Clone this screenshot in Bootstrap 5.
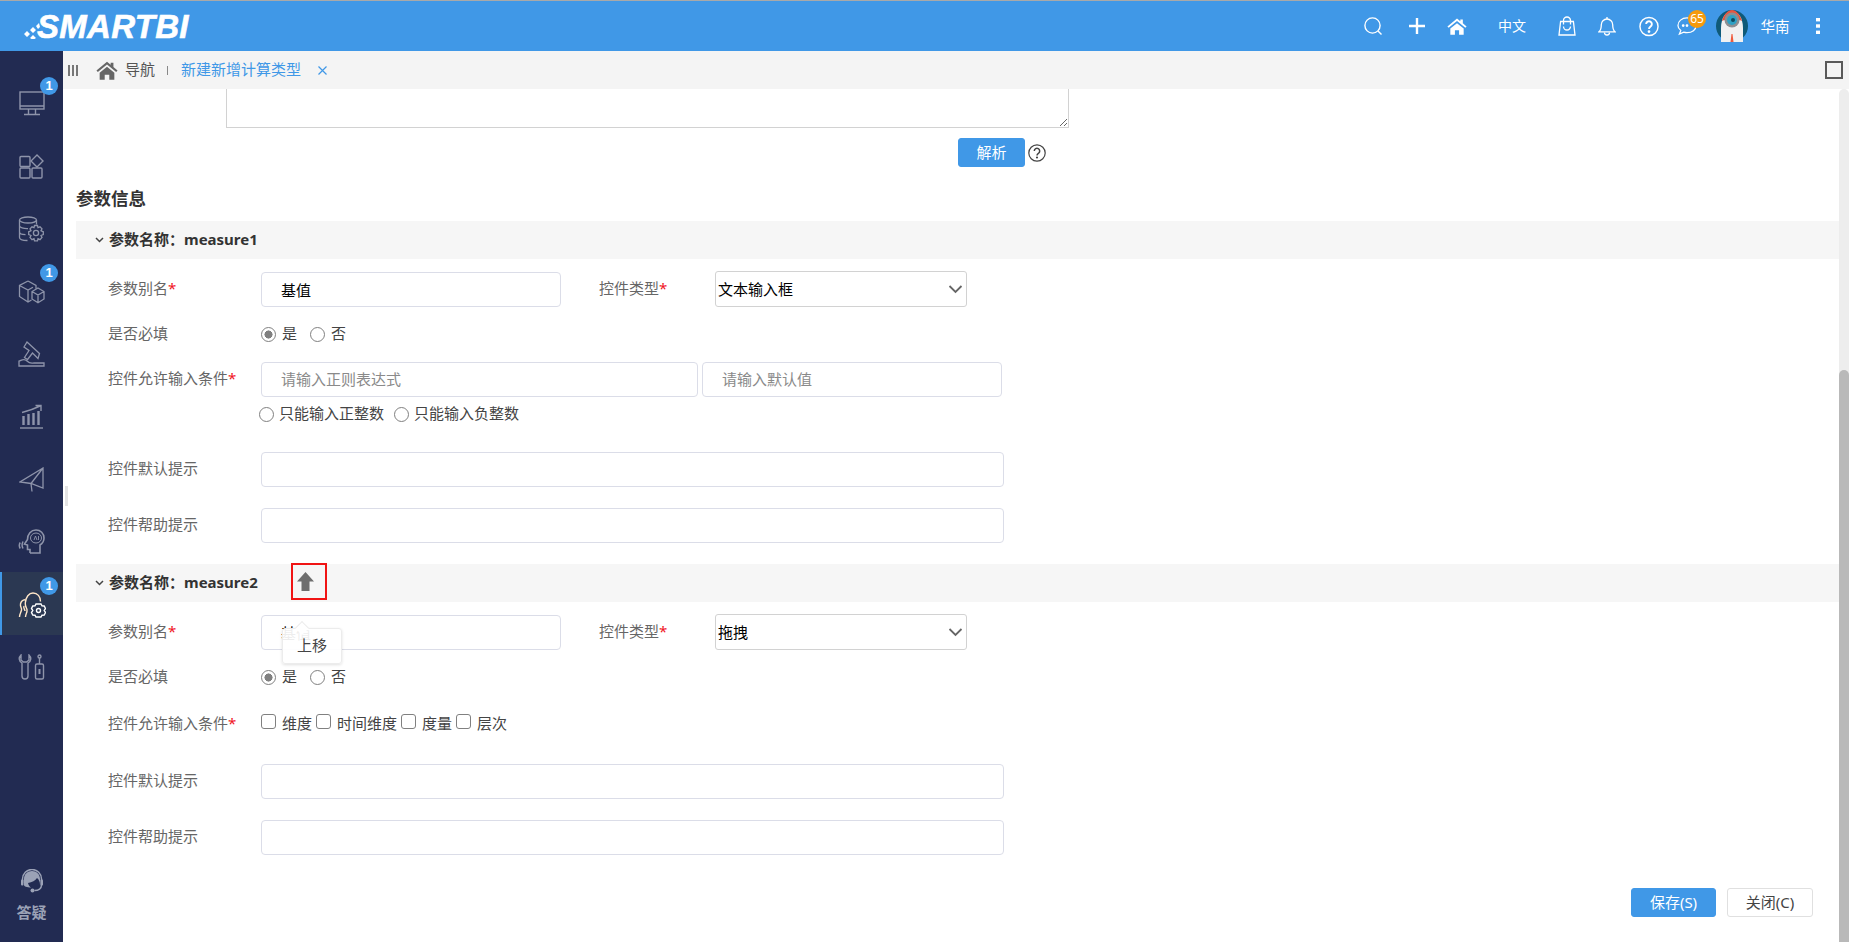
<!DOCTYPE html>
<html lang="zh">
<head>
<meta charset="utf-8">
<title>新建新增计算类型</title>
<link href="https://cdn.jsdelivr.net/npm/bootstrap@5.3.0/dist/css/bootstrap.min.css" rel="stylesheet">
<style>
html,body{height:942px;overflow:hidden;background:#fff}
body{font-family:"Noto Sans","Noto Sans CJK SC",sans-serif;font-size:15px;color:#555;line-height:1.3}
.app-top{height:51px;background:#4098e7;border-top:1px solid #a9a9a9;color:#fff;position:relative}
.logo-text{font-family:"Liberation Sans",sans-serif;font-weight:700;font-style:italic;font-size:33px;line-height:1;color:#fff;margin-left:-3px;letter-spacing:.3px;-webkit-text-stroke:.6px #fff}
.logo-wrap{margin-left:24px;padding-top:1px}
.top-tools{margin-left:auto}
.tool{display:flex;align-items:center;justify-content:center}
.tool-s{width:20px}
.tool-lang{font-size:14px;width:30px;white-space:nowrap}
.msg-count{position:absolute;top:9px;left:1688px;width:18px;height:18px;background:#f59a0c;color:#fff;font-size:12px;font-weight:400;padding:0;line-height:18px;border-radius:50%;text-align:center}
.app-body{height:891px}
.side{width:63px;background:#222b52;padding-top:20.5px;position:relative;flex:none}
.side-item{height:62.6px;position:relative;display:flex;align-items:center;justify-content:center;padding-top:2px}
.side-item.on{background:#2b3852;border-left:2px solid #4098e7;padding-right:2px}
.side-num{position:absolute;top:5px;left:40px;width:18px;height:18px;border-radius:50%;background:#4098e7;color:#fff;font-family:"Liberation Sans",sans-serif;font-size:13px;line-height:18px;padding:0;font-weight:700}
.side-help{position:absolute;left:0;right:0;top:818px;text-align:center;color:#9ba2b6;font-weight:700;font-size:15px;line-height:1.2}
.side-help svg{display:block;margin:0 auto 10px}
.split-mark{position:absolute;left:65px;top:486px;width:3px;height:20px;background:#e4e4e4}
.tabbar{height:38px;background:#f4f4f4;padding-left:5px;padding-right:6px;flex:none}
.bars3{width:10px;margin-right:18px}
.tab-home{font-size:15px;color:#555;margin-left:7px}
.tab-sep{width:1px;height:9px;background:#888;margin:0 13px 0 12px}
.tab-cur{color:#4098e7}
.tab-x{margin-left:17px}
.max-box{margin-left:auto;width:18px;height:18px;border:2px solid #5a5a5a;background:#f4f4f4}
.work{flex:1;min-height:0}
.pane{flex:1;min-width:0;position:relative}
.track{width:10px;background:#ededed;border-radius:5px 5px 0 0;flex:none}
.thumb{height:572px;margin-top:281px;background:#b9b9b9;border-radius:5px 5px 0 0}
.old-area{display:block;margin-left:163px;width:843px;height:39px;border:1px solid #d2d2d2;border-top:0;border-radius:0;padding:0}
.parse-row{margin-top:10px;margin-left:895px;height:29px}
.btn-main{background:#4098e7;border:1px solid #4098e7;color:#fff;font-size:15px;padding:0;height:29px;border-radius:3px}
.btn-main:hover{background:#4098e7;color:#fff}
.btn-parse{width:67px}
.help-dot{margin-left:3px}
.sec-title{font-size:17.5px;font-weight:700;color:#333;margin:19px 0 0 13px;height:24px;line-height:24px}
.para-head{margin-left:13px;height:38px;background:#f6f6f6;font-weight:700;font-size:15px;color:#333;padding-left:19px;position:relative}
.para-head svg.chev{margin-right:5px}
.f-row{margin-left:45px;display:flex;align-items:center;height:36px}
.f-lab{width:153px;flex:none;color:#666;font-size:15px;white-space:nowrap}
.req{color:#f0141e}
.f-in{border:1px solid #dbdde8;border-radius:4px;height:35px;padding:0 19px;font-size:15px;color:#000;box-shadow:none}
.f-in::placeholder{color:#8a8a8a}
.w-alias{width:300px}
.f-lab2{width:116px;flex:none;margin-left:38px;color:#666;font-size:15px}
.f-sel{width:252px;height:36px;border:1px solid #d2d2d2;border-radius:3px;padding:0 0 0 2px;color:#000;font-size:15px;background-position:right 3px center;background-size:15px 12px;
background-image:url("data:image/svg+xml,%3csvg xmlns='http://www.w3.org/2000/svg' viewBox='0 0 15 12'%3e%3cpath fill='none' stroke='%23666' stroke-width='1.8' d='M1.5 3l6 6 6-6'/%3e%3c/svg%3e")}
.w-reg{width:437px}
.w-def{width:300px;margin-left:4px}
.w-long{width:743px}
.pick{display:inline-flex;align-items:center;color:#444;font-size:15px;white-space:nowrap}
.pick .form-check-input{margin:0;width:15px;height:15px;border:1px solid #808080;flex:none;box-shadow:none}
.pick .form-check-input:checked{background-color:#fff;border-color:#808080;background-image:radial-gradient(circle,#808080 0 42%,transparent 46%)}
.pick .form-check-input[type=checkbox]{border-radius:3px;margin-top:-6px}
.pick span{margin-left:6px}
.pick-gap{margin-left:13px}
.pick-gap2{margin-left:10px}
.pick-gap3{margin-left:4px}
.sub-row{margin-left:196px;height:34px;display:flex;align-items:center;margin-top:-1px;padding-top:2px}
.sub-row .pick span{margin-left:5px}
.red-box{position:absolute;left:215px;top:-1px;width:36px;height:37px;border:2px solid #f01414;display:flex;align-items:center;justify-content:flex-start;padding-left:4px}
.tip-box{position:absolute;left:206px;top:64px;width:60px;height:36px;background:rgba(255,255,255,.93);border:1px solid #ececec;border-radius:3px;box-shadow:0 1px 3px rgba(0,0,0,.12);font-size:15px;font-weight:400;color:#444;display:flex;align-items:center;justify-content:center}
.tip-box::before{content:"";position:absolute;left:14px;top:-6px;width:10px;height:10px;background:#fff;transform:rotate(45deg);border-left:1px solid #ececec;border-top:1px solid #ececec}
.foot-row{margin-top:33px;padding-right:26px;justify-content:flex-end;gap:11px;display:flex}
.btn-save{width:85px}
.btn-close-x{width:86px;height:29px;background:#fff;border:1px solid #e0e0e0;color:#444;font-size:15px;padding:0;border-radius:3px}
.mt-r9{margin-top:9px}.mt-r12{margin-top:12px}
</style>
</head>
<body>
<div class="app-top d-flex align-items-center">
  <div class="logo-wrap d-flex align-items-center">
    <svg width="16" height="24" viewBox="0 0 16 24" fill="#fff"><path d="M0 19l3-3 3 3-3 3zM6 23l3-3 3 3-3 2zM6 15l3-3 3 3-3 3zM12 11l3-3 1 4-2 2z"/></svg>
    <span class="logo-text">SMARTBI</span>
  </div>
  <div class="top-tools d-flex align-items-center" style="margin-right:29px">
    <div class="tool tool-s"><svg width="20" height="20" viewBox="0 0 20 20" fill="none" stroke="#fff" stroke-width="1.4"><circle cx="9.5" cy="9.5" r="7.6"/><path d="M15 15l3.5 3.5"/></svg></div>
    <div class="tool tool-s" style="margin-left:24px"><svg width="16" height="16" viewBox="0 0 16 16" stroke="#fff" stroke-width="2.4"><path d="M8 0v16M0 8h16"/></svg></div>
    <div class="tool tool-s" style="margin-left:20px"><svg width="25" height="21" viewBox="0 0 24 20" fill="#fff"><path d="M12 0.5L0.5 10l1.500 1.500L12 3.500l10 8 1.500-1.500L19 6.200V1.500h-3v2.200z"/><path d="M4 12.500L12 6l8 6.500V20h-5.500v-5.500h-5V20H4z"/></svg></div>
    <div class="tool tool-lang" style="margin-left:30px">中文</div>
    <div class="tool tool-s" style="margin-left:30px"><svg width="18" height="20" viewBox="0 0 18 20" fill="none" stroke="#fff" stroke-width="1.3"><path d="M2.6 5.500h12.800L17 19H1zM5.500 8.500V4.500a3.500 3.500 0 0 1 7 0v4"/><path d="M5.500 10.500a3.500 3.500 0 0 0 7 0"/></svg></div>
    <div class="tool tool-s" style="margin-left:20px"><svg width="18" height="20" viewBox="0 0 18 20" fill="none" stroke="#fff" stroke-width="1.3"><path d="M1 15.800c2-1.500 2.300-3.500 2.300-7A5.700 5.700 0 0 1 9 3a5.700 5.700 0 0 1 5.700 5.800c0 3.500.3 5.500 2.300 7z"/><path d="M9 1v2M6.500 16.500a2.500 2.500 0 0 0 5 0"/></svg></div>
    <div class="tool tool-s" style="margin-left:22px"><svg width="21" height="21" viewBox="0 0 21 21" fill="none" stroke="#fff" stroke-width="1.5"><circle cx="10.500" cy="10.500" r="9.500"/><path stroke-width="2" d="M7.500 8a3 3 0 1 1 4.500 2.600c-1 .6-1.500 1.200-1.500 2.600"/><circle cx="10.500" cy="15.800" r=".7" fill="#fff"/></svg></div>
    <div class="tool tool-s" style="margin-left:18px"><svg width="21" height="20" viewBox="0 0 21 20" fill="none" stroke="#fff" stroke-width="1.3"><path d="M2.500 18.500l1.500-3.700C2 13.300 1 11.500 1 9.500 1 5 5 1.500 10.500 1.500S20 5 20 9.500 16 17 10.500 17c-1 0-2.500-.2-3.500-.5z"/><circle cx="6.500" cy="9.500" r=".8" fill="#fff"/><circle cx="10.500" cy="9.500" r=".8" fill="#fff"/></svg></div>
    <div class="tool" style="margin-left:19px;width:32px"><svg width="32" height="32" viewBox="0 0 32 32"><circle cx="16" cy="16" r="16" fill="#0f5a78"/><path d="M5 32V18C5 8 10 1 16 1s11 7 11 17v14z" fill="#f1f1f1"/><path d="M6 11C8 4 12 0 16 0s8 4 10 11c-3-2-17-2-20 0z" fill="#e8553f"/><circle cx="16" cy="10" r="7.500" fill="#8d8f92"/><circle cx="16" cy="10" r="5" fill="#2ea1c4"/><circle cx="17" cy="10" r="2" fill="#0f4a60"/><path d="M14.500 32l1-8h1l1 8z" fill="#f05a3c"/></svg></div>
    <div class="tool" style="margin-left:12px;width:30px;font-size:14.500px;white-space:nowrap">华南</div>
    <div class="tool" style="margin-left:26px;width:4px"><svg width="4" height="16" viewBox="0 0 4 16" fill="#fff"><rect y="0" width="4" height="3.400"/><rect y="6.300" width="4" height="3.400"/><rect y="12.600" width="4" height="3.400"/></svg></div>
  </div>
  <span class="badge msg-count">65</span>
</div>

<div class="app-body d-flex">
  <nav class="side">
    <div class="side-item"><span class="badge side-num">1</span>
      <svg width="26" height="25" viewBox="0 0 26 25" fill="none" stroke="#8e94aa" stroke-width="1.400"><rect x="1" y="1" width="24" height="17"/><path d="M1 15h24M9.500 18v5M16.500 18v5M5 23.500h16"/></svg></div>
    <div class="side-item">
      <svg width="25" height="25" viewBox="0 0 25 25" fill="none" stroke="#8e94aa" stroke-width="1.400"><rect x="1" y="2.500" width="10" height="10" rx="1"/><rect x="1" y="14" width="10" height="10" rx="1"/><rect x="13" y="14" width="10" height="10" rx="1"/><path d="M18 1l6 6-6 6-6-6z"/></svg></div>
    <div class="side-item">
      <svg width="27" height="26" viewBox="0 0 27 26" fill="none" stroke="#8e94aa" stroke-width="1.300"><ellipse cx="10" cy="4" rx="8.500" ry="3"/><path d="M1.500 4v17.500c0 1.800 3.500 3 8 3M18.500 4v4.500M1.500 9.800c0 1.700 4 3 8.500 2.800M1.500 16c0 1.600 3 2.600 6 2.600"/><circle cx="18" cy="17" r="2.600"/><path d="M16.500 9.500h3l.5 2.200 2-.9 2 2.100-1 1.900 2.300 1v2.800L23 19.500l1 2-2 2.100-2-1-.5 2.200h-3l-.5-2.200-2 1-2-2.100 1-2-2.300-.9v-2.800l2.300-1-1-1.900 2-2.100 2 .9z"/></svg></div>
    <div class="side-item"><span class="badge side-num">1</span>
      <svg width="27" height="24" viewBox="0 0 27 24" fill="none" stroke="#8e94aa" stroke-width="1.300"><path d="M10 1l8 4.500v3.200M10 1L1.500 5.500v11L10 22l3.500-2M1.500 5.500L10 10l5-2.700M10 10v12"/><path d="M20 8l6 3.500v7.500L20 22.800 14 19v-7.500zM14 11.500l6 3.500 6-3.500M20 15v7.800"/></svg></div>
    <div class="side-item">
      <svg width="27" height="26" viewBox="0 0 27 26" fill="none" stroke="#8e94aa" stroke-width="1.300"><path d="M9 1l12.500 11.500-1.500 5L14.500 12l-5 6.500-3-2L11 9.500 6 6z"/><path d="M1 25v-5c3-1 5-3 8 0s5 2 7 2h10v3z"/></svg></div>
    <div class="side-item">
      <svg width="24" height="25" viewBox="0 0 24 25" fill="none" stroke="#8e94aa" stroke-width="1.400"><path d="M0 24h23"/><path d="M3.500 21v-9M8.500 21V10M13.500 21V9M18.500 21V7" stroke-width="2.400"/><path d="M2 8.500C8 7 14 5 20 2M15.500 1.500H21V7"/></svg></div>
    <div class="side-item">
      <svg width="26" height="25" viewBox="0 0 26 25" fill="none" stroke="#8e94aa" stroke-width="1.300"><path d="M24 1L1 15l11 1.500L24 21zM24 1L12 16.500l1 8"/></svg></div>
    <div class="side-item">
      <svg width="27" height="25" viewBox="0 0 27 25" fill="none" stroke="#8e94aa" stroke-width="1.600"><path d="M12 24v-3.500H9.500V16L6.500 15l3-4.500C9.500 5 13 1 18 1c4.500 0 8 3.300 8 8 0 3-1.500 5.500-4 7v8h-10"/><ellipse cx="18" cy="9" rx="5.500" ry="5" stroke-width="1"/><path d="M16 11l1.500-4 1.500 4M20.500 7v4" stroke-width=".9"/><path d="M5 12.500c-1.200 2.300-1.200 4.700 0 7M2.200 13.500c-1.200 2-1.200 4 0 6" stroke-width="1.500"/></svg></div>
    <div class="side-item on"><span class="badge side-num" style="left:38px">1</span>
      <svg width="28" height="26" viewBox="0 0 28 26" fill="none" stroke="#fff" stroke-width="1.400"><path d="M1.500 25c0-3 1.500-4.500 2-7 .4-2-1.500-3-1-6 .5-2.500 2.500-4 4.500-4.200" stroke="#ffe6c8"/><path d="M7.500 25c0-3 2-4.500 1.500-7.500-.3-1.500-2-2.500-1.700-6.500C7.700 5 11 1 15 1c4.500 0 7.500 3.500 7.500 8.500" stroke="#ffe6c8"/><path d="M6 14c-1 2.500 1 3 1 5" stroke="#ffe6c8"/><circle cx="20.500" cy="18.500" r="2"/><path d="M18 12h5l1 1.800 2.200.2 1.300 2.500-1.300 2 1.300 2-1.300 2.500-2.200.2L23 25h-5l-1-1.800-2.200-.2-1.300-2.500 1.300-2-1.300-2 1.300-2.500 2.200-.2z"/></svg></div>
    <div class="side-item">
      <svg width="27" height="26" viewBox="0 0 27 26" fill="none" stroke="#8e94aa" stroke-width="1.400"><path d="M3 1C.5 3.500.5 7 4 9v13a3 3 0 0 0 6 0V9c3.500-2 3.500-5.500 1-8v5l-2.500 2h-3L3 6z"/><circle cx="21.500" cy="2.500" r="1.500"/><path d="M21.500 4v6"/><rect x="17.500" y="10" width="8" height="15" rx="1.500"/><path d="M21.500 15v5" stroke-width="2"/></svg></div>
    <div class="side-help">
      <svg width="24" height="24" viewBox="0 0 24 24"><path d="M4 16V10c0-5 3.500-8 8-8s8 3 8 8v6c0-3-1-5.500-3-7-1.500 2.500-5 4.500-9 5 .5 2 1.500 3.500 3 4.500-4 0-7-1-7-2.500z" fill="#9ba2b6"/><path d="M2.500 14V10a9.500 9.500 0 0 1 19 0v6c0 3.500-3 5.500-7 5.500" fill="none" stroke="#9ba2b6" stroke-width="1.500"/><rect x="1" y="10.500" width="2.500" height="6" rx="1" fill="#9ba2b6"/><rect x="20.500" y="10.500" width="2.500" height="6" rx="1" fill="#9ba2b6"/><circle cx="12.500" cy="21.500" r="2" fill="#9ba2b6"/></svg>
      答疑
    </div>
  </nav>

  <div class="flex-grow-1 d-flex flex-column position-relative" style="min-width:0">
    <div class="tabbar d-flex align-items-center">
      <svg class="bars3" width="10" height="11" viewBox="0 0 10 11" fill="#777"><rect x="0" width="2" height="11"/><rect x="4" width="2" height="11"/><rect x="8" width="2" height="11"/></svg>
      <svg width="22" height="19" viewBox="0 0 24 20" fill="#666"><path d="M12 0.500L0.500 10l1.500 1.500L12 3.500l10 8 1.500-1.500L19 6.200V1.500h-3v2.200z"/><path d="M4 12.500L12 6l8 6.500V20h-5.500v-5.500h-5V20H4z"/></svg>
      <span class="tab-home">导航</span>
      <span class="tab-sep"></span>
      <span class="tab-cur">新建新增计算类型</span>
      <svg class="tab-x" width="9" height="9" viewBox="0 0 9 9" stroke="#4098e7" stroke-width="1.200"><path d="M.5.500l8 8M8.500.500l-8 8"/></svg>
      <span class="max-box"></span>
    </div>
    <div class="work d-flex">
      <div class="pane">
        <textarea class="old-area form-control" aria-label="内容"></textarea>
        <div class="parse-row d-flex align-items-center">
          <button class="btn btn-main btn-parse" type="button">解析</button>
          <svg class="help-dot" width="18" height="18" viewBox="0 0 18 18" fill="none" stroke="#444" stroke-width="1.200"><circle cx="9" cy="9" r="8.200"/><path stroke-width="1.500" d="M6.300 7a2.700 2.700 0 1 1 4.100 2.300c-1 .6-1.400 1-1.400 2.200"/><circle cx="9" cy="13.500" r=".5"/></svg>
        </div>
        <h2 class="sec-title">参数信息</h2>

        <div class="para-head d-flex align-items-center" style="margin-top:11px">
          <svg class="chev" width="9" height="6" viewBox="0 0 9 6" fill="none" stroke="#444" stroke-width="1.500"><path d="M1 1l3.500 3.500L8 1"/></svg>
          <span>参数名称：measure1</span>
        </div>
        <div class="f-row mt-r12">
          <span class="f-lab">参数别名<span class="req">*</span></span>
          <input class="form-control f-in w-alias" value="基值" aria-label="参数别名">
          <span class="f-lab2">控件类型<span class="req">*</span></span>
          <select class="form-select f-sel" aria-label="控件类型"><option>文本输入框</option></select>
        </div>
        <div class="f-row mt-r9">
          <span class="f-lab">是否必填</span>
          <label class="pick"><input class="form-check-input" type="radio" name="a1" checked><span>是</span></label>
          <label class="pick pick-gap"><input class="form-check-input" type="radio" name="a1"><span>否</span></label>
        </div>
        <div class="f-row mt-r9">
          <span class="f-lab">控件允许输入条件<span class="req">*</span></span>
          <input class="form-control f-in w-reg" placeholder="请输入正则表达式" aria-label="正则">
          <input class="form-control f-in w-def" placeholder="请输入默认值" aria-label="默认值">
        </div>
        <div class="sub-row">
          <label class="pick"><input class="form-check-input" type="radio" name="a2"><span>只能输入正整数</span></label>
          <label class="pick pick-gap2"><input class="form-check-input" type="radio" name="a2"><span>只能输入负整数</span></label>
        </div>
        <div class="f-row" style="margin-top:21px">
          <span class="f-lab">控件默认提示</span>
          <input class="form-control f-in w-long" aria-label="控件默认提示">
        </div>
        <div class="f-row" style="margin-top:20px">
          <span class="f-lab">控件帮助提示</span>
          <input class="form-control f-in w-long" aria-label="控件帮助提示">
        </div>

        <div class="para-head d-flex align-items-center" style="margin-top:21px">
          <svg class="chev" width="9" height="6" viewBox="0 0 9 6" fill="none" stroke="#444" stroke-width="1.500"><path d="M1 1l3.500 3.500L8 1"/></svg>
          <span>参数名称：measure2</span>
          <span class="red-box"><svg width="17" height="19" viewBox="0 0 17 19" fill="#6e6e6e"><path d="M8.500 0L17 9.500h-4.500V19h-8V9.500H0z"/></svg></span>
          <div class="tip-box">上移</div>
        </div>
        <div class="f-row mt-r12">
          <span class="f-lab">参数别名<span class="req">*</span></span>
          <input class="form-control f-in w-alias" value="基值" aria-label="参数别名">
          <span class="f-lab2">控件类型<span class="req">*</span></span>
          <select class="form-select f-sel" aria-label="控件类型"><option>拖拽</option></select>
        </div>
        <div class="f-row mt-r9">
          <span class="f-lab">是否必填</span>
          <label class="pick"><input class="form-check-input" type="radio" name="b1" checked><span>是</span></label>
          <label class="pick pick-gap"><input class="form-check-input" type="radio" name="b1"><span>否</span></label>
        </div>
        <div class="f-row" style="margin-top:11px">
          <span class="f-lab">控件允许输入条件<span class="req">*</span></span>
          <label class="pick"><input class="form-check-input" type="checkbox"><span>维度</span></label>
          <label class="pick pick-gap3"><input class="form-check-input" type="checkbox"><span>时间维度</span></label>
          <label class="pick pick-gap3"><input class="form-check-input" type="checkbox"><span>度量</span></label>
          <label class="pick pick-gap3"><input class="form-check-input" type="checkbox"><span>层次</span></label>
        </div>
        <div class="f-row" style="margin-top:21px">
          <span class="f-lab">控件默认提示</span>
          <input class="form-control f-in w-long" aria-label="控件默认提示">
        </div>
        <div class="f-row" style="margin-top:20px">
          <span class="f-lab">控件帮助提示</span>
          <input class="form-control f-in w-long" aria-label="控件帮助提示">
        </div>
        <div class="foot-row">
          <button class="btn btn-main btn-save" type="button">保存(S)</button>
          <button class="btn btn-close-x" type="button">关闭(C)</button>
        </div>
      </div>
      <div class="track"><div class="thumb"></div></div>
    </div>
  </div>
</div>
<span class="split-mark"></span>
<script src="https://cdn.jsdelivr.net/npm/bootstrap@5.3.0/dist/js/bootstrap.bundle.min.js"></script>
</body>
</html>
